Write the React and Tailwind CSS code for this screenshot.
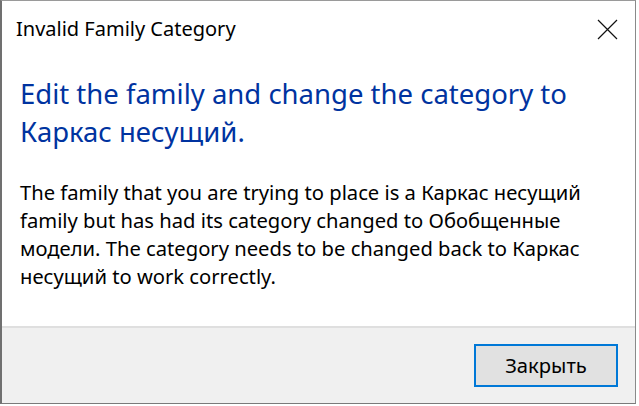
export default function App() {
  const font = { fontFamily: '"Noto Sans", "Open Sans", sans-serif' };
  return (
    <div className="w-[639px] h-[406px] bg-white overflow-hidden" style={font}>
      <div className="w-[636px] h-[404px] flex flex-col border-l-2 border-l-[#707070] border-t border-t-[#9a9a9a] border-r border-r-[#8a8a8a] border-b border-b-[#7a7a7a] bg-white">
        <div className="h-[56px] flex items-center justify-between pl-[14px] pr-[17px]">
          <span className="text-[20px] text-black leading-none">Invalid Family Category</span>
          <svg width="21" height="21" viewBox="0 0 21 21">
            <path d="M1 1 L20 20 M20 1 L1 20" stroke="#111" strokeWidth="1.2" fill="none" />
          </svg>
        </div>
        <div className="flex-1 pl-[18px] pt-[18px]">
          <div className="text-[27.5px] leading-[38px] text-[#0033a0] whitespace-nowrap">
            Edit the family and change the category to
            <br />
            Каркас несущий.
          </div>
          <div className="mt-[27px] text-[20.2px] leading-[28px] text-black whitespace-nowrap">
            The family that you are trying to place is a Каркас несущий
            <br />
            family but has had its category changed to Обобщенные
            <br />
            модели. The category needs to be changed back to Каркас
            <br />
            несущий to work correctly.
          </div>
        </div>
        <div className="h-[77px] border-t-2 border-t-[#dfdfdf] bg-[#f0f0f0] flex items-start justify-end pr-[17px] pt-[16px]">
          <button className="w-[144px] h-[43px] border-2 border-[#0078d7] bg-[#e1e1e1] text-[20.2px] text-black flex items-center justify-center">
            Закрыть
          </button>
        </div>
      </div>
    </div>
  );
}
